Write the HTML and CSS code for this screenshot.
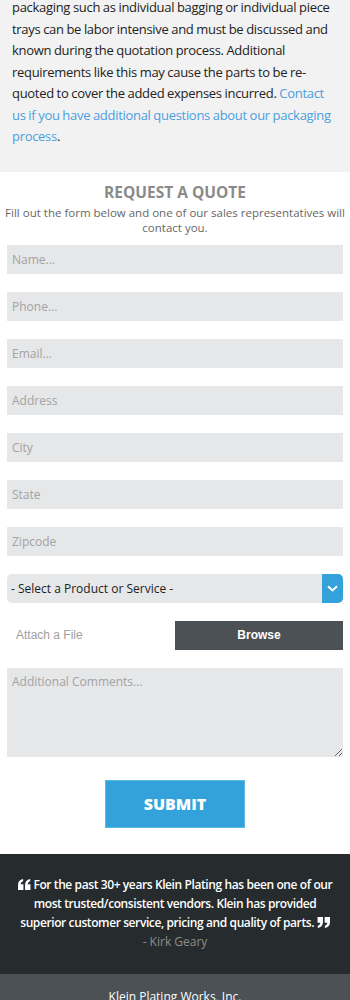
FILE: index.html
```html
<html lang="en">
<head>
    <link rel="stylesheet" href="styles.css">
</head>
<body>
    <div class='intro'>
        <p>packaging such as individual bagging or individual piece trays can be labor intensive and must be discussed and known during the quotation process. Additional requirements like this may cause the parts to be re-quoted to cover the added expenses incurred. <a href='#'>Contact us if you have additional questions about our packaging process</a>.</p>
    </div>

    <div class='quote-form'>
        <h2>REQUEST A QUOTE</h2>
        <p class='lead'>Fill out the form below and one of our sales representatives will contact you.</p>
        <form class='fields'>
            <input type="text" class='field' placeholder='Name...' />
            <input type="text" class='field' placeholder='Phone...' />
            <input type="email" class='field' placeholder='Email...' />
            <input type="text" class='field' placeholder='Address' />
            <input type="text" class='field' placeholder='City' />
            <input type="text" class='field' placeholder='State' />
            <input type="text" class='field' placeholder='Zipcode' />
            <div class='select'>
                <span>- Select a Product or Service -</span>
                <span class='select-arrow'>
                    <svg width="11" height="7" viewBox="0 0 11 7"><path d="M1 1.2L5.5 5.4L10 1.2" fill="none" stroke="#fff" stroke-width="2"/></svg>
                </span>
            </div>
            <div class='attach'>
                <span class='attach-label'>Attach a File</span>
                <span class='browse'>Browse</span>
            </div>
            <textarea class='field comments' placeholder='Additional Comments...'></textarea>
            <button type="button" class='submit'>SUBMIT</button>
        </form>
    </div>

    <div class='testimonial'>
        <p>
            <svg class='mark' width="13" height="11" viewBox="0 0 24 20"><path d="M0 20V11C0 5 3 1.5 9.5 0V4C6.5 5 5 7 5 9.5H10V20ZM13 20V11C13 5 16 1.5 22.5 0V4C19.5 5 18 7 18 9.5H23V20Z" fill="#fff"/></svg>
            For the past 30+ years Klein Plating has been one of our most trusted/consistent vendors. Klein has provided superior customer service, pricing and quality of parts.
            <svg class='mark' width="13" height="11" viewBox="0 0 24 20"><path d="M24 0V9C24 15 21 18.5 14.5 20V16C17.5 15 19 13 19 10.5H14V0ZM11 0V9C11 15 8 18.5 1.5 20V16C4.5 15 6 13 6 10.5H1V0Z" fill="#fff"/></svg>
        </p>
        <span class='author'>- Kirk Geary</span>
    </div>

    <div class='footer'>Klein Plating Works, Inc.</div>
</body>
</html>
```

FILE: styles.css
```css
body {
    font-family: "Open Sans", Arial, sans-serif;
    margin: 0;
    padding: 0;
    background-color: #fff;
    color: #222;
}
.intro {
    background-color: #f2f2f2;
    padding: 0 12px 24px;
    overflow: hidden;
}
.intro p {
    margin: -3px 0 0;
    font-size: 13px;
    letter-spacing: -0.3px;
    word-spacing: -0.3px;
    line-height: 21.5px;
}
.intro a {
    color: #4a9fdf;
    text-decoration: none;
}
.quote-form {
    padding: 10px 7px 0;
    text-align: center;
}
.quote-form h2 {
    margin: 0;
    font-size: 15.5px;
    line-height: 20px;
    font-weight: 700;
    color: #8a8a8a;
}
.lead {
    margin: 3px -4px 0;
    font-size: 11.5px;
    line-height: 15px;
    color: #666;
}
.fields {
    display: flex;
    flex-direction: column;
    gap: 18px;
    margin: 10px 0 0;
}
.field {
    height: 29px;
    border: none;
    background-color: #e6e7e8;
    font-family: "Open Sans", Arial, sans-serif;
    font-size: 12px;
    padding: 0 5px;
    color: #333;
}
.field::placeholder {
    color: #a3a3a3;
}
.select {
    height: 29px;
    display: flex;
    align-items: center;
    justify-content: space-between;
    background-color: #e6e7e8;
    border-radius: 5px;
    overflow: hidden;
    font-size: 12px;
    padding-left: 4px;
    color: #222;
}
.select-arrow {
    width: 21px;
    height: 100%;
    background-color: #33a1da;
    display: flex;
    align-items: center;
    justify-content: center;
}
.attach {
    display: flex;
    align-items: center;
    height: 29px;
    font-family: "Liberation Sans", Arial, sans-serif;
    font-size: 12px;
}
.attach-label {
    flex: 1;
    text-align: left;
    padding-left: 9px;
    color: #a0a0a0;
}
.browse {
    width: 168px;
    height: 100%;
    display: flex;
    align-items: center;
    justify-content: center;
    background-color: #4b5154;
    color: #fff;
    font-weight: 700;
}
.comments {
    height: 89px;
    padding-top: 5px;
    resize: vertical;
}
.submit {
    align-self: center;
    width: 140px;
    height: 48px;
    margin: 5px 0 26px;
    background-color: #33a1da;
    border: 1px solid #5cb6e6;
    color: #fff;
    font-family: "Open Sans", Arial, sans-serif;
    font-size: 16px;
    font-weight: 800;
    cursor: pointer;
}
.testimonial {
    background-color: #262b2d;
    text-align: center;
    padding: 21px 16px 23px;
}
.testimonial p {
    margin: 0;
    color: #fff;
    font-size: 12px;
    letter-spacing: -0.4px;
    font-weight: 600;
    line-height: 19px;
}
.mark {
    vertical-align: -1px;
}
.author {
    display: block;
    margin-top: 0;
    color: #8e8e8e;
    font-size: 12px;
    line-height: 19px;
}
.footer {
    background-color: #4b5154;
    color: #fff;
    text-align: center;
    font-size: 12px;
    padding: 14px 0;
}
```
